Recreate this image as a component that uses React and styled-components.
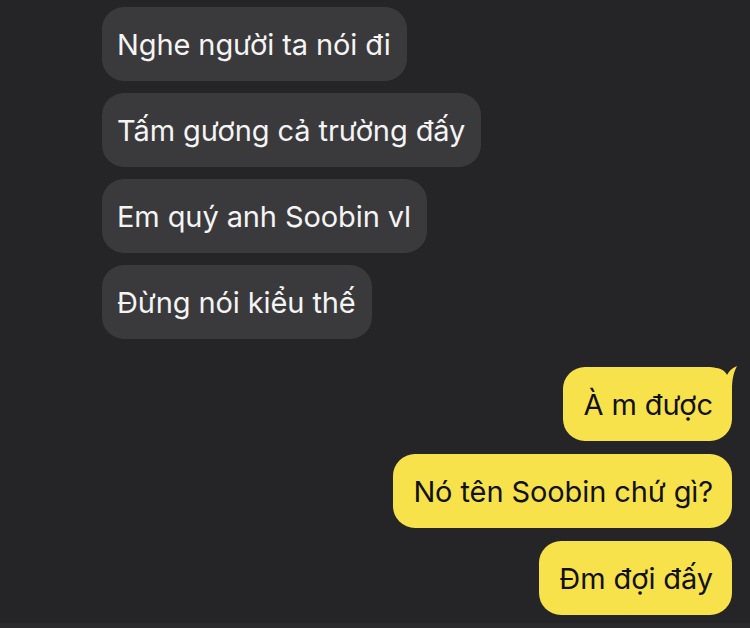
import React from 'react';
import styled, {createGlobalStyle} from 'styled-components';

const Global = createGlobalStyle`
  html, body {
    margin: 0;
    padding: 0;
    background: #252527;
  }
  body {
    font-family: Inter, "Noto Sans", "DejaVu Sans", sans-serif;
    -webkit-font-smoothing: antialiased;
  }
`;

const Screen = styled.div`
  width: 750px;
  height: 628px;
  display: flex;
  flex-direction: column;
  overflow: hidden;
  background: #252527;
`;

const Thread = styled.div`
  flex: 1;
  display: flex;
  flex-direction: column;
  padding: 7px 18px 0 102px;
  gap: 28px;
`;

const Group = styled.div`
  display: flex;
  flex-direction: column;
  align-items: ${p => p.mine ? 'flex-end' : 'flex-start'};
  gap: ${p => p.mine ? '13px' : '12px'};
`;

const Bubble = styled.div`
  position: relative;
  height: 74px;
  box-sizing: border-box;
  display: flex;
  align-items: center;
  padding: ${p => p.mine ? '0 19px 0 20px' : '0 16px 0 15px'};
  border-radius: 22px;
  font-size: 29px;
  letter-spacing: -0.1px;
  white-space: nowrap;
  background: ${p => p.mine ? '#f8e24c' : '#3a3a3c'};
  color: ${p => p.mine ? '#111' : '#f4f4f4'};
`;

const Tail = styled.svg`
  position: absolute;
  top: -1px;
  right: -5px;
  width: 22px;
  height: 24px;
`;

const Footer = styled.div`
  height: 5px;
  background: #2a2a2c;
`;

const theirs = [
	'Nghe người ta nói đi',
	'Tấm gương cả trường đấy',
	'Em quý anh Soobin vl',
	'Đừng nói kiểu thế',
];

const mine = [
	'À m được',
	'Nó tên Soobin chứ gì?',
	'Đm đợi đấy',
];

export default function App() {
	return (
		<Screen>
			<Global/>
			<Thread>
				<Group>
					{theirs.map(t => <Bubble key={t}>{t}</Bubble>)}
				</Group>
				<Group mine>
					{mine.map((t, i) => (
						<Bubble mine key={t}>
							{t}
							{i === 0 && (
								<Tail viewBox="0 0 22 24">
									<path d="M0 2 C6 2 10 5 12 9 C14 5 17 2 22 0 C19 6 17 12 17 24 L0 24 Z" fill="#f8e24c"/>
								</Tail>
							)}
						</Bubble>
					))}
				</Group>
			</Thread>
			<Footer/>
		</Screen>
	);
}
